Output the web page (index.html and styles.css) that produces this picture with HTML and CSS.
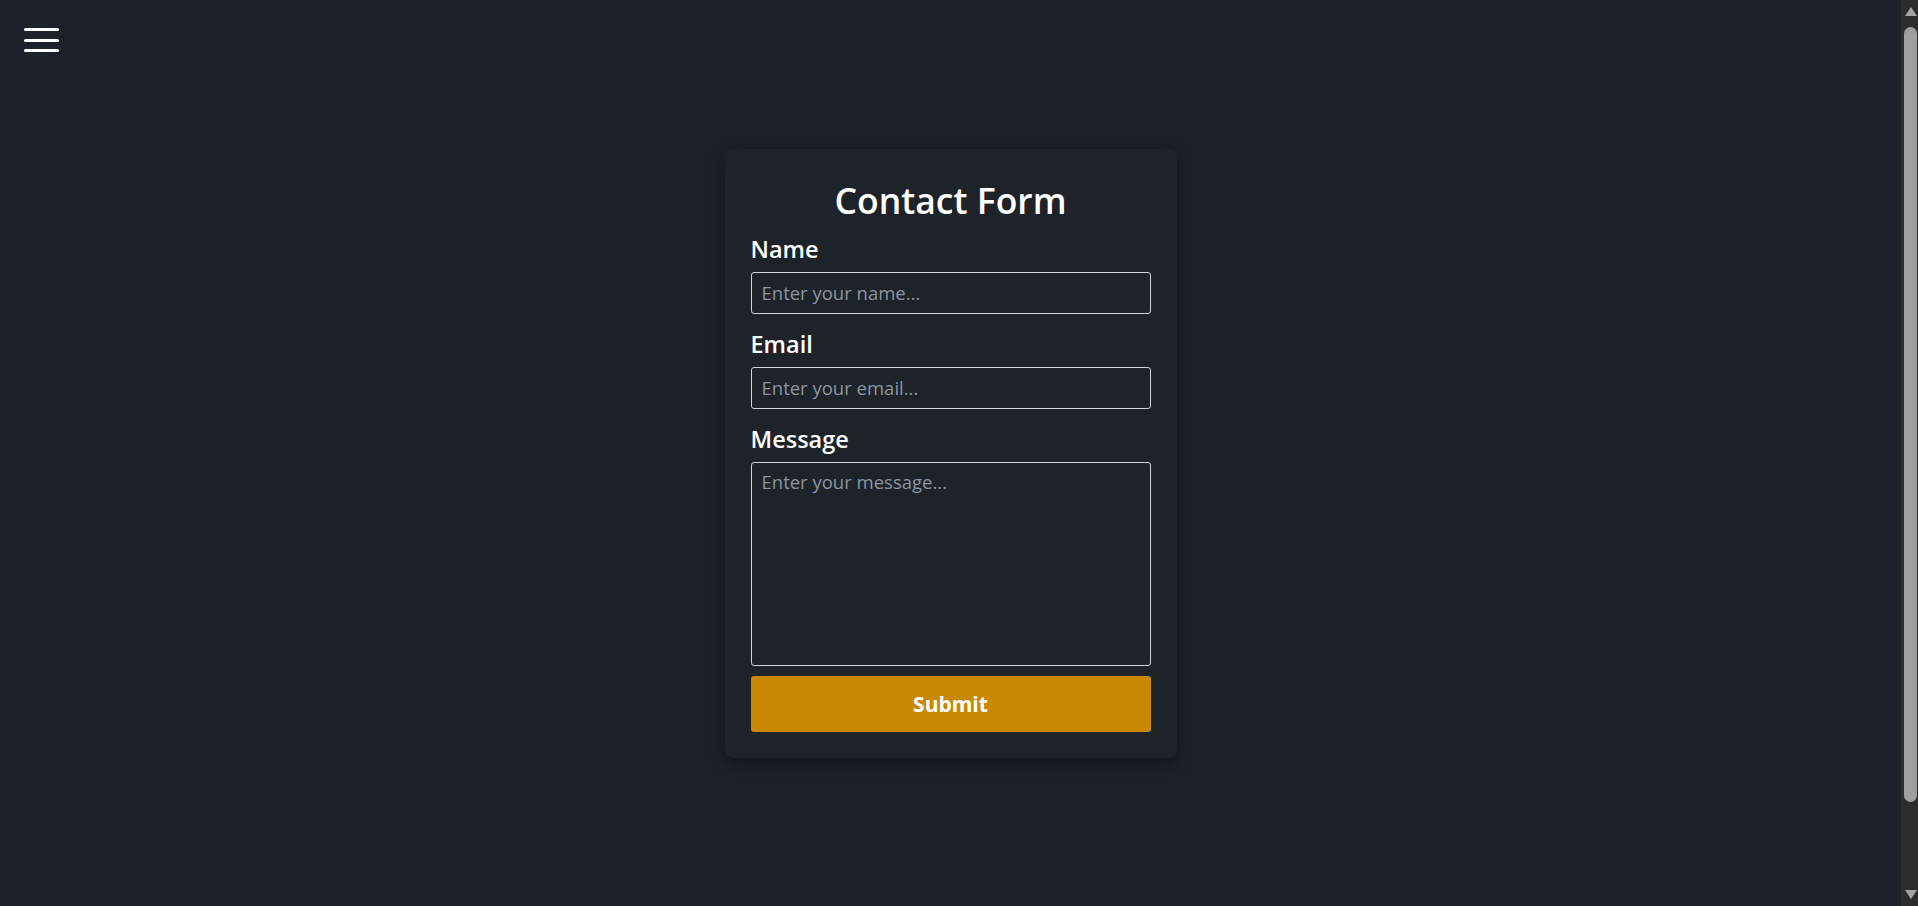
FILE: index.html
```html
<!DOCTYPE html>
<html lang="en">
<head>
<meta charset="utf-8">
<title>Contact Form</title>
<link rel="stylesheet" href="styles.css">
</head>
<body>
<button class="menu-toggle" aria-label="Menu">
  <span class="menu-bar"></span>
  <span class="menu-bar"></span>
  <span class="menu-bar"></span>
</button>
<main class="page">
  <form class="card">
    <h1 class="card-title">Contact Form</h1>
    <div class="field">
      <label class="field-label" for="name">Name</label>
      <input class="field-input" id="name" type="text" placeholder="Enter your name...">
    </div>
    <div class="field">
      <label class="field-label" for="email">Email</label>
      <input class="field-input" id="email" type="email" placeholder="Enter your email...">
    </div>
    <div class="field field-last">
      <label class="field-label" for="message">Message</label>
      <textarea class="field-input field-textarea" id="message" placeholder="Enter your message..."></textarea>
    </div>
    <button class="submit-btn" type="button">Submit</button>
  </form>
</main>
<div class="scrollbar" aria-hidden="true">
  <span class="scroll-arrow scroll-arrow-up"></span>
  <span class="scroll-thumb"></span>
  <span class="scroll-arrow scroll-arrow-down"></span>
</div>
</body>
</html>
```

FILE: styles.css
```css
html {
  background: #1d222a;
}

body {
  margin: 0;
  padding-right: 17px;
  background: #1d222a;
  color: #ffffff;
  font-family: "Open Sans", "Noto Sans", sans-serif;
}

.menu-toggle {
  position: absolute;
  top: 28px;
  left: 24px;
  display: flex;
  flex-direction: column;
  gap: 7.5px;
  padding: 0;
  margin: 0;
  border: 0;
  background: transparent;
  cursor: pointer;
}

.menu-bar {
  display: block;
  width: 35px;
  height: 3px;
  border-radius: 1.5px;
  background: #ffffff;
}

.page {
  min-height: 100vh;
  display: flex;
  align-items: center;
  justify-content: center;
}

.card {
  width: 400px;
  padding: 29px 26px 26px;
  background: #1e2229;
  border-radius: 8px;
  box-shadow: 0 4px 18px rgba(0, 0, 0, 0.45);
  display: flex;
  flex-direction: column;
}

.card-title {
  margin: 0 0 12px;
  font-size: 35.5px;
  line-height: 44px;
  font-weight: 600;
  text-align: center;
  color: #ffffff;
}

.field {
  display: flex;
  flex-direction: column;
  gap: 8px;
  margin-bottom: 15px;
}

.field-last {
  margin-bottom: 10px;
}

.field-label {
  font-size: 23.5px;
  line-height: 30px;
  font-weight: 600;
  color: #ffffff;
}

.field-input {
  box-sizing: border-box;
  width: 100%;
  height: 42px;
  margin: 0;
  padding: 0 10px;
  background: transparent;
  border: 1px solid #cfd2d6;
  border-radius: 3px;
  color: #ffffff;
  font-family: "Open Sans", "Noto Sans", sans-serif;
  font-size: 18.5px;
  outline: none;
}

.field-input::placeholder {
  color: #8b95a0;
  opacity: 1;
}

.field-textarea {
  height: 204px;
  padding: 6px 10px;
  line-height: normal;
  resize: none;
  display: block;
}

.submit-btn {
  height: 56px;
  margin: 0;
  padding: 0;
  border: 0;
  border-radius: 3px;
  background: #ca8904;
  color: #ffffff;
  font-family: "Open Sans", "Noto Sans", sans-serif;
  font-size: 21px;
  font-weight: 700;
  cursor: pointer;
}

/* Browser scrollbar as seen in the screenshot */
.scrollbar {
  position: fixed;
  top: 0;
  right: 0;
  box-sizing: border-box;
  width: 17px;
  height: 100vh;
  padding-left: 2px;
  background: #2c2c2c;
  display: flex;
  flex-direction: column;
  align-items: center;
}

.scroll-arrow {
  display: block;
  width: 0;
  height: 0;
  border-left: 6.5px solid transparent;
  border-right: 6.5px solid transparent;
}

.scroll-arrow-up {
  margin-top: 7px;
  border-bottom: 9px solid #a3a3a3;
}

.scroll-thumb {
  display: block;
  width: 13px;
  height: 775px;
  margin-top: 11px;
  border-radius: 7px;
  background: #9f9f9f;
}

.scroll-arrow-down {
  margin-top: auto;
  margin-bottom: 7px;
  border-top: 9px solid #a3a3a3;
}
```
